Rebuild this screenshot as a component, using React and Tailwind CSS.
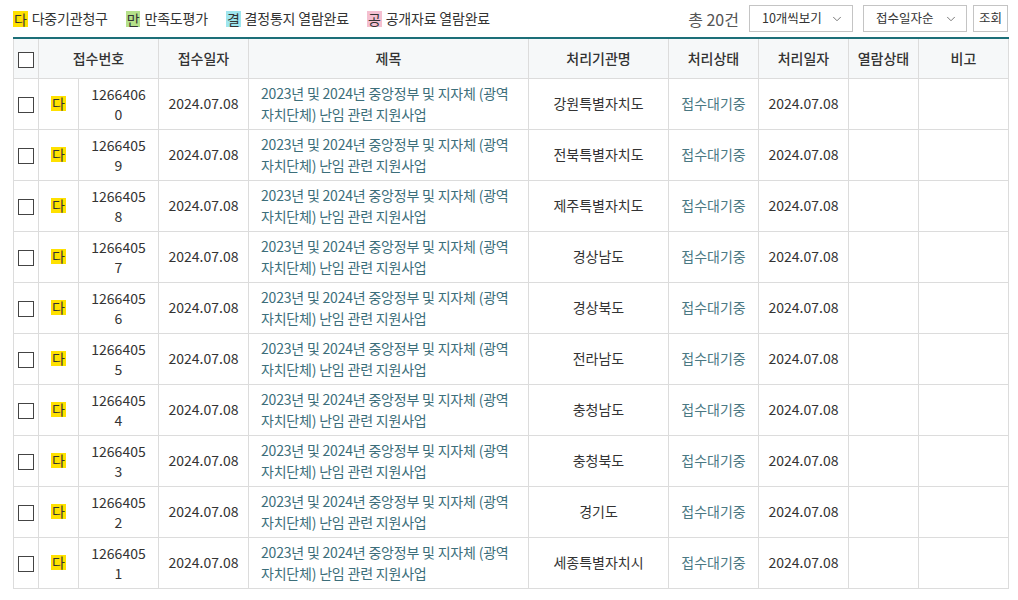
import { ChevronDown } from 'lucide-react';

const LEGEND = [
  { mark: '다', label: '다중기관청구', bg: 'bg-[#ffe100]' },
  { mark: '만', label: '만족도평가', bg: 'bg-[#b5e08a]' },
  { mark: '결', label: '결정통지 열람완료', bg: 'bg-[#9fe6ee]' },
  { mark: '공', label: '공개자료 열람완료', bg: 'bg-[#f4bfd0]' },
];

const AGENCIES = [
  '강원특별자치도',
  '전북특별자치도',
  '제주특별자치도',
  '경상남도',
  '경상북도',
  '전라남도',
  '충청남도',
  '충청북도',
  '경기도',
  '세종특별자치시',
];

const rows = AGENCIES.map((agency, i) => ({
  no: String(12664060 - i),
  date: '2024.07.08',
  title: ['2023년 및 2024년 중앙정부 및 지자체 (광역', '자치단체) 난임 관련 지원사업'],
  agency,
  status: '접수대기중',
  doneDate: '2024.07.08',
}));

function Checkbox() {
  return <span className="inline-block w-[16px] h-[16px] border border-[#444] bg-white align-middle" />;
}

function Select({ label, width }) {
  return (
    <div className={`flex items-center justify-between h-[27px] border border-[#c4c4c4] bg-white pl-3 pr-2 text-[12.5px] text-[#333] ${width}`}>
      <span>{label}</span>
      <ChevronDown size={14} strokeWidth={1.5} className="text-[#666]" />
    </div>
  );
}

export default function App() {
  return (
    <div className="w-[1018px] h-[600px] bg-white pl-[13px] pr-[10px] text-[#333] font-['Noto_Sans_CJK_KR','Noto_Sans',sans-serif]">
      {/* top bar */}
      <div className="flex items-center justify-between h-[37px]">
        <div className="flex items-center gap-[18px] text-[14px] tracking-[-0.2px]">
          {LEGEND.map((l) => (
            <div key={l.mark} className="flex items-center gap-[4px]">
              <span className={`${l.bg} leading-[16px] px-[1px]`}>{l.mark}</span>
              <span>{l.label}</span>
            </div>
          ))}
        </div>
        <div className="flex items-center">
          <span className="text-[16px] text-[#555] mr-[10px]">총 20건</span>
          <Select label="10개씩보기" width="w-[104px]" />
          <div className="w-[10px]" />
          <Select label="접수일자순" width="w-[104px]" />
          <button className="ml-[6px] h-[27px] px-[5px] border border-[#c4c4c4] bg-white text-[12.5px] text-[#333]">
            조회
          </button>
        </div>
      </div>

      {/* table */}
      <table className="w-[995px] table-fixed border-collapse border-t-2 border-t-[#1c6f78] text-[14px]">
        <colgroup>
          <col className="w-[25px]" />
          <col className="w-[40px]" />
          <col className="w-[80px]" />
          <col className="w-[90px]" />
          <col className="w-[280px]" />
          <col className="w-[140px]" />
          <col className="w-[90px]" />
          <col className="w-[90px]" />
          <col className="w-[70px]" />
          <col className="w-[90px]" />
        </colgroup>
        <thead>
          <tr className="h-[40px] bg-[#f6f8f9] text-[#333] font-medium">
            <th className="border border-[#dcdcdc] border-t-0 text-center font-medium">
              <Checkbox />
            </th>
            <th colSpan={2} className="border border-[#dcdcdc] border-t-0 font-medium">접수번호</th>
            <th className="border border-[#dcdcdc] border-t-0 font-medium">접수일자</th>
            <th className="border border-[#dcdcdc] border-t-0 font-medium">제목</th>
            <th className="border border-[#dcdcdc] border-t-0 font-medium">처리기관명</th>
            <th className="border border-[#dcdcdc] border-t-0 font-medium">처리상태</th>
            <th className="border border-[#dcdcdc] border-t-0 font-medium">처리일자</th>
            <th className="border border-[#dcdcdc] border-t-0 font-medium">열람상태</th>
            <th className="border border-[#dcdcdc] border-t-0 font-medium">비고</th>
          </tr>
        </thead>
        <tbody>
          {rows.map((r) => (
            <tr key={r.no} className="h-[51px]">
              <td className="border border-[#dcdcdc] text-center">
                <Checkbox />
              </td>
              <td className="border border-[#dcdcdc] text-center">
                <span className="bg-[#ffe100] leading-[15px] inline-block px-[1px]">다</span>
              </td>
              <td className="border border-[#dcdcdc] text-center leading-[20px]">
                <span className="block">{r.no.slice(0, 7)}</span>
                <span className="block">{r.no.slice(7)}</span>
              </td>
              <td className="border border-[#dcdcdc] text-center">{r.date}</td>
              <td className="border border-[#dcdcdc] pl-[12px] text-[#3c6e7a] leading-[21px] tracking-[-0.2px]">
                <span className="block whitespace-nowrap">{r.title[0]}</span>
                <span className="block whitespace-nowrap">{r.title[1]}</span>
              </td>
              <td className="border border-[#dcdcdc] text-center">{r.agency}</td>
              <td className="border border-[#dcdcdc] text-center text-[#4a7883]">{r.status}</td>
              <td className="border border-[#dcdcdc] text-center">{r.doneDate}</td>
              <td className="border border-[#dcdcdc]" />
              <td className="border border-[#dcdcdc]" />
            </tr>
          ))}
        </tbody>
      </table>
    </div>
  );
}
